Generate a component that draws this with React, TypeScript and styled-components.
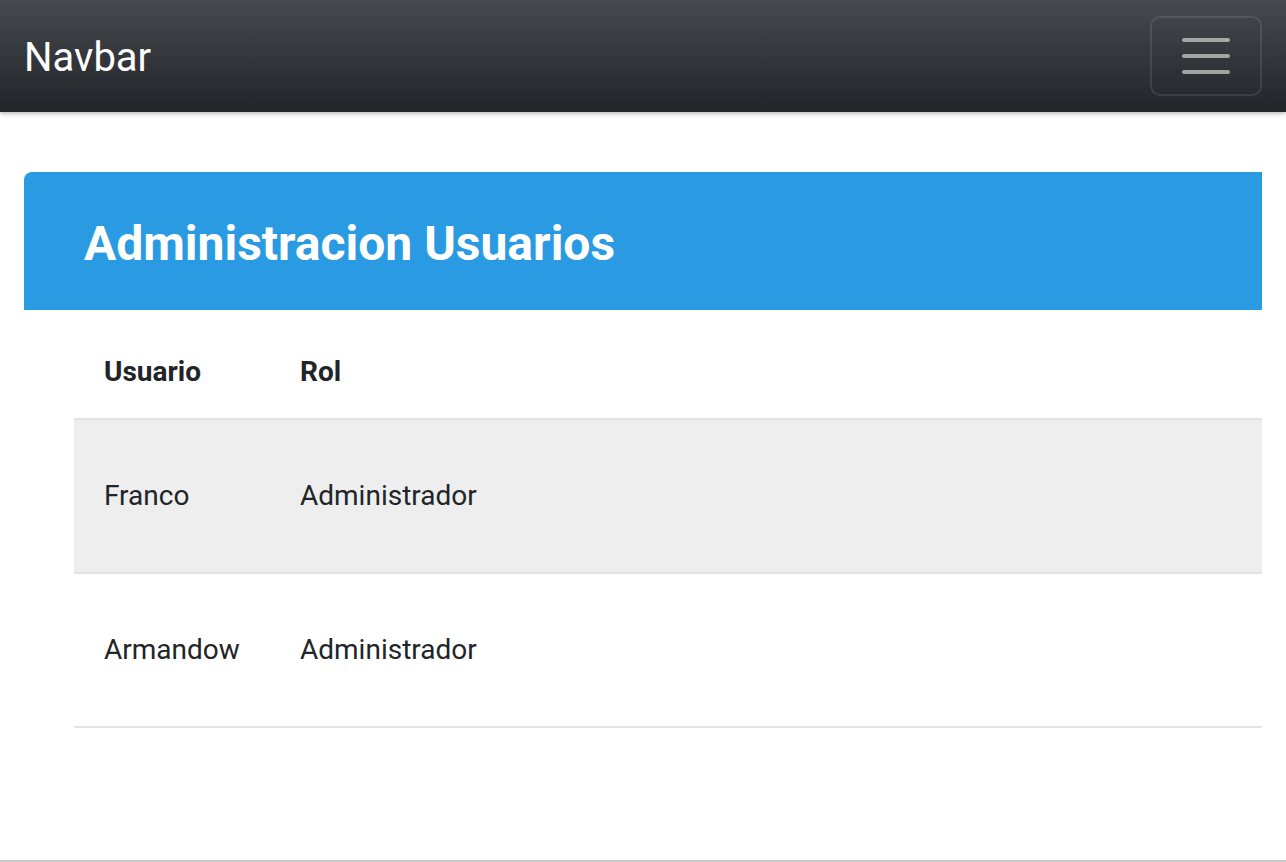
import React from 'react';
import styled, { createGlobalStyle } from 'styled-components';

const GlobalStyle = createGlobalStyle`
  html, body {
    margin: 0;
    padding: 0;
    background: #fff;
    font-family: Roboto, "Liberation Sans", sans-serif;
    color: #212529;
  }
  * {
    box-sizing: border-box;
  }
`;

const users = [
  { name: 'Franco', role: 'Administrador' },
  { name: 'Armandow', role: 'Administrador' },
];

export default function App() {
  return (
    <Styled.Page>
      <GlobalStyle />
      <Styled.Nav>
        <Styled.Brand>Navbar</Styled.Brand>
        <Styled.Toggler aria-label="menu">
          <Styled.Bar />
          <Styled.Bar />
          <Styled.Bar />
        </Styled.Toggler>
      </Styled.Nav>

      <Styled.Main>
        <Styled.Card>
          <Styled.CardHeader>
            <Styled.Title>Administracion Usuarios</Styled.Title>
          </Styled.CardHeader>
          <Styled.CardBody>
            <Styled.Table>
              <colgroup>
                <Styled.Col $width="196px" />
                <Styled.Col />
              </colgroup>
              <thead>
                <tr>
                  <Styled.Th>Usuario</Styled.Th>
                  <Styled.Th>Rol</Styled.Th>
                </tr>
              </thead>
              <tbody>
                {users.map((u, i) => (
                  <Styled.Row key={u.name} $striped={i % 2 === 0}>
                    <Styled.Td>{u.name}</Styled.Td>
                    <Styled.Td>{u.role}</Styled.Td>
                  </Styled.Row>
                ))}
              </tbody>
            </Styled.Table>
          </Styled.CardBody>
        </Styled.Card>
      </Styled.Main>

      <Styled.Footer />
    </Styled.Page>
  );
}

const Styled = {
  Page: styled.div`
    display: flex;
    flex-direction: column;
    min-height: 100vh;
  `,

  Nav: styled.nav`
    position: relative;
    z-index: 1;
    display: flex;
    align-items: center;
    justify-content: space-between;

    height: 112px;
    padding: 0 24px;
    background: linear-gradient(180deg, #46494d 0%, #212428 100%);
    box-shadow: 0 2px 4px rgba(0, 0, 0, 0.25);
  `,

  Brand: styled.a`
    color: #fff;
    font-size: 40px;
    line-height: 1;
    margin-top: 4px;
  `,

  Toggler: styled.button`
    display: flex;
    flex-direction: column;
    align-items: center;
    justify-content: center;
    gap: 12px;

    width: 112px;
    height: 80px;
    padding: 0;
    background: transparent;
    border: 2px solid rgba(255, 255, 255, 0.1);
    border-radius: 10px;
    cursor: pointer;
  `,

  Bar: styled.span`
    display: block;
    width: 48px;
    height: 4px;
    border-radius: 2px;
    background: rgba(255, 255, 255, 0.55);
  `,

  Main: styled.main`
    flex: 1;
    padding: 60px 24px 0;
  `,

  Card: styled.section`
    border-radius: 8px 0 0 8px;
    overflow: hidden;
    background: #fff;
    box-shadow: 0 0 1px rgba(0, 0, 0, 0.04);
  `,

  CardHeader: styled.header`
    display: flex;
    align-items: center;
    height: 138px;
    padding: 0 60px;
    background: #2a9be3;
  `,

  Title: styled.h1`
    margin: 0;
    color: #fff;
    font-size: 48px;
    font-weight: 700;
    line-height: 1;
    margin-top: 5px;
  `,

  CardBody: styled.div`
    padding: 16px 0 69px 50px;
  `,

  Table: styled.table`
    width: 100%;
    table-layout: fixed;
    border-collapse: collapse;
    font-size: 28px;
  `,

  Col: styled.col<{ $width?: string }>`
    width: ${(p) => p.$width ?? 'auto'};
  `,

  Th: styled.th`
    padding: 30px;
    line-height: 32px;
    text-align: left;
    font-weight: 700;
    border-bottom: 2px solid #e3e3e3;
  `,

  Row: styled.tr<{ $striped?: boolean }>`
    background: ${(p) => (p.$striped ? '#eeeeee' : '#fff')};
    border-bottom: 2px solid #e3e3e3;
  `,

  Td: styled.td`
    height: 154px;
    padding: 0 30px;
    line-height: 32px;
    vertical-align: middle;
  `,

  Footer: styled.footer`
    height: 2px;
    background: #c8c8c8;
  `,
};
